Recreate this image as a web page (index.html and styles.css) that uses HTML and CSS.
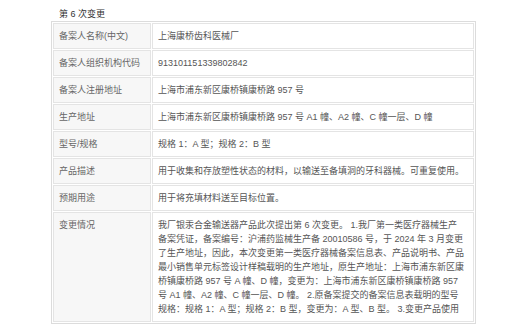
FILE: index.html
```html
<!DOCTYPE html>
<html lang="zh-CN">
<head>
<meta charset="utf-8">
<title>第 6 次变更</title>
<link rel="stylesheet" href="styles.css">
</head>
<body>
<div class="record">
  <div class="record-title">第 6 次变更</div>
  <table class="record-table">
    <tbody>
      <tr><td class="label">备案人名称(中文)</td><td class="value">上海康桥齿科医械厂</td></tr>
      <tr><td class="label">备案人组织机构代码</td><td class="value">913101151339802842</td></tr>
      <tr><td class="label">备案人注册地址</td><td class="value">上海市浦东新区康桥镇康桥路 957 号</td></tr>
      <tr><td class="label">生产地址</td><td class="value">上海市浦东新区康桥镇康桥路 957 号 A1 幢、A2 幢、C 幢一层、D 幢</td></tr>
      <tr><td class="label">型号/规格</td><td class="value">规格 1：A 型；规格 2：B 型</td></tr>
      <tr><td class="label">产品描述</td><td class="value">用于收集和存放塑性状态的材料，以输送至备填洞的牙科器械。可重复使用。</td></tr>
      <tr><td class="label">预期用途</td><td class="value">用于将充填材料送至目标位置。</td></tr>
      <tr><td class="label">变更情况</td><td class="value">我厂银汞合金输送器产品此次提出第 6 次变更。 1.我厂第一类医疗器械生产<br>备案凭证，备案编号：沪浦药监械生产备 20010586 号，于 2024 年 3 月变更<br>了生产地址，因此，本次变更第一类医疗器械备案信息表、产品说明书、产品<br>最小销售单元标签设计样稿载明的生产地址，原生产地址：上海市浦东新区康<br>桥镇康桥路 957 号 A 幢、D 幢，变更为：上海市浦东新区康桥镇康桥路 957<br>号 A1 幢、A2 幢、C 幢一层、D 幢。 2.原备案提交的备案信息表载明的型号<br>规格：规格 1：A 型；规格 2：B 型，变更为：A 型、B 型。 3.变更产品使用</td></tr>
    </tbody>
  </table>
</div>
</body>
</html>
```
FILE: styles.css
```css
html, body {
  margin: 0;
  padding: 0;
  background: #ffffff;
}

body {
  font-family: "Liberation Sans", "Noto Sans CJK SC", sans-serif;
  font-size: 9px;
  line-height: 14px;
  color: #555555;
}

.record {
  margin: 7px 0 0 51px;
  width: 425px;
}

.record-title {
  padding-left: 8px;
  color: #333333;
  font-size: 9px;
  line-height: 14px;
}

.record-table {
  width: 425px;
  table-layout: fixed;
  border-collapse: separate;
  border-spacing: 1px;
  border: 1px solid #dcdcdc;
  background: #ffffff;
}

.record-table td {
  box-sizing: border-box;
  border: 1px solid #e4e4e4;
  padding: 5px 5px;
  vertical-align: top;
  line-height: 14px;
}

.record-table .label {
  width: 98px;
  background: #f7f7f7;
  color: #666666;
}

.record-table .value {
  background: #ffffff;
  color: #555555;
  white-space: nowrap;
}
```
